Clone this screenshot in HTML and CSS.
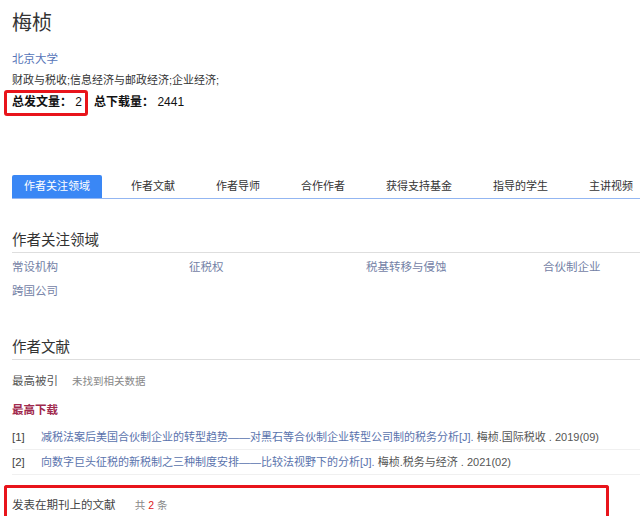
FILE: index.html
```html
<!DOCTYPE html>
<html lang="zh-CN">
<head>
<meta charset="utf-8">
<title>梅桢</title>
<link rel="stylesheet" href="styles.css">
</head>
<body>
<div class="page">
  <h1 class="name">梅桢</h1>
  <div class="org"><a href="#">北京大学</a></div>
  <div class="subjects">财政与税收;信息经济与邮政经济;企业经济;</div>
  <div class="stats">
    <span class="stat mark"><b>总发文量：</b> 2</span>
    <span class="stat"><b>总下载量：</b> 2441</span>
  </div>

  <div class="tabs">
    <span class="tab active">作者关注领域</span>
    <span class="tab">作者文献</span>
    <span class="tab">作者导师</span>
    <span class="tab">合作作者</span>
    <span class="tab">获得支持基金</span>
    <span class="tab">指导的学生</span>
    <span class="tab">主讲视频</span>
  </div>

  <h2 class="sec-title first">作者关注领域</h2>
  <div class="fields">
    <a href="#">常设机构</a>
    <a href="#">征税权</a>
    <a href="#">税基转移与侵蚀</a>
    <a href="#">合伙制企业</a>
    <a href="#">跨国公司</a>
  </div>

  <h2 class="sec-title second">作者文献</h2>
  <div class="sub cited"><span class="sub-label">最高被引</span><span class="empty">未找到相关数据</span></div>
  <div class="sub download"><span class="sub-label hot">最高下载</span></div>
  <ul class="refs">
    <li><span class="idx">[1]</span><a href="#">减税法案后美国合伙制企业的转型趋势——对黑石等合伙制企业转型公司制的税务分析[J].</a> 梅桢.国际税收 . 2019(09)</li>
    <li><span class="idx">[2]</span><a href="#">向数字巨头征税的新税制之三种制度安排——比较法视野下的分析[J].</a> 梅桢.税务与经济 . 2021(02)</li>
  </ul>

  <div class="journal">
    <span class="journal-title">发表在期刊上的文献</span>
    <span class="count">共 <em>2</em> 条</span>
  </div>
</div>
</body>
</html>
```

FILE: styles.css
```css
html, body {
  margin: 0;
  padding: 0;
  overflow: hidden;
  background: #fff;
}
body {
  font-family: "Liberation Sans", "Noto Sans CJK SC", sans-serif;
  color: #333;
}
a {
  text-decoration: none;
}
.page {
  width: 628px;
  padding-left: 12px;
  overflow: hidden;
}
.name {
  margin: 11px 0 0;
  font-size: 20px;
  line-height: 24px;
  font-weight: normal;
  color: #333;
}
.org {
  margin-top: 14px;
  font-size: 11.5px;
  line-height: 20px;
}
.org a {
  color: #5675b8;
}
.subjects {
  margin-top: 1px;
  font-size: 11px;
  line-height: 20px;
  color: #333;
}
.stats {
  margin-top: 2px;
  display: flex;
  gap: 12px;
  font-size: 12px;
  line-height: 20px;
  color: #111;
}
.stat b {
  font-weight: bold;
}
.mark {
  position: relative;
}
.mark::after {
  content: "";
  position: absolute;
  left: -8px;
  right: -6px;
  top: -2px;
  bottom: -4px;
  border: 3px solid #e8141b;
  border-radius: 3px;
}
.tabs {
  margin-top: 63px;
  display: flex;
  gap: 17px;
  border-bottom: 1px solid #93b6f2;
  overflow: hidden;
}
.tab {
  flex: none;
  padding: 0 12px;
  font-size: 11px;
  line-height: 23px;
  color: #333;
  white-space: nowrap;
}
.tab.active {
  background: #3a87f5;
  color: #fff;
  border-radius: 2px 2px 0 0;
}
.sec-title {
  margin: 0;
  font-size: 14.5px;
  line-height: 20px;
  font-weight: normal;
  color: #333;
  padding-bottom: 2px;
  border-bottom: 1px solid #dedede;
}
.sec-title.first {
  margin-top: 31px;
}
.sec-title.second {
  margin-top: 34px;
}
.fields {
  margin-top: 2px;
  display: grid;
  grid-template-columns: 177px 177px 177px 1fr;
}
.fields a {
  font-size: 11.5px;
  line-height: 24px;
  color: #7482a6;
}
.sub {
  font-size: 11.5px;
  line-height: 20px;
}
.cited {
  margin-top: 11px;
}
.download {
  margin-top: 9px;
}
.sub-label {
  color: #555;
  margin-right: 14px;
}
.sub-label.hot {
  color: #a0294d;
  font-weight: bold;
}
.empty {
  font-size: 10.5px;
  color: #888;
}
.refs {
  list-style: none;
  margin: 5px 0 0;
  padding: 0;
}
.refs li {
  font-size: 11px;
  line-height: 24px;
  color: #555;
  border-bottom: 1px solid #f0f0f0;
  white-space: nowrap;
  overflow: hidden;
}
.idx {
  display: inline-block;
  width: 29px;
  color: #444;
  font-size: 11.5px;
}
.refs a {
  color: #5a73ad;
}
.journal {
  margin: 10px 0 0 -8px;
  width: 594px;
  height: 40px;
  padding: 7px 0 0 5px;
  border: 3px solid #e8141b;
  border-bottom: none;
  border-radius: 3px 3px 0 0;
  font-size: 11.5px;
  line-height: 20px;
}
.journal-title {
  color: #444;
  margin-right: 16px;
}
.count {
  font-size: 10.5px;
  color: #888;
}
.count em {
  font-style: normal;
  color: #d22;
}
```
